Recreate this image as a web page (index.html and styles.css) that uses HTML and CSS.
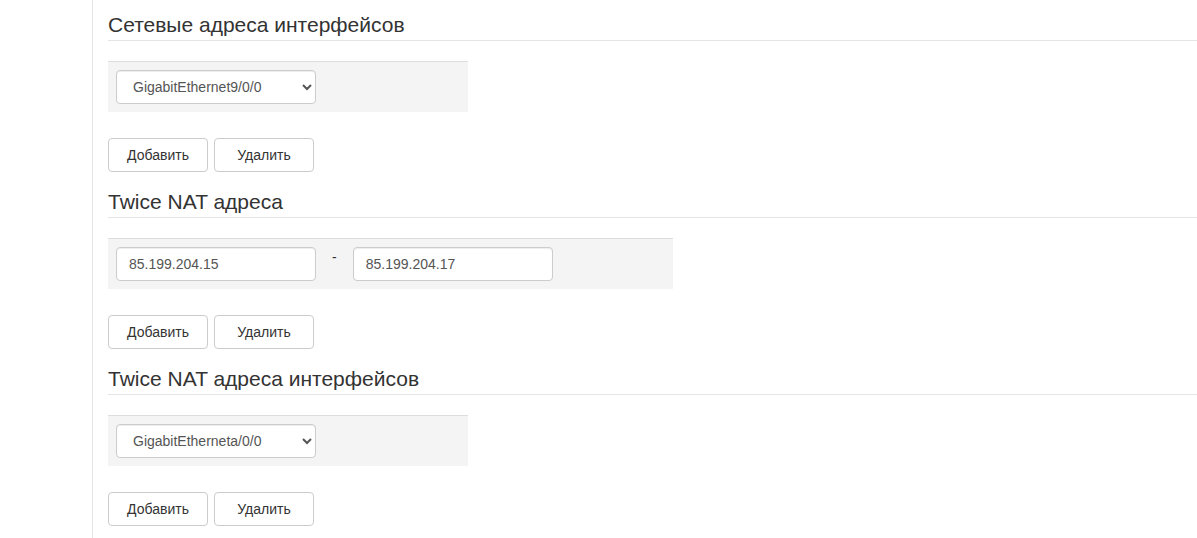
FILE: index.html
```html
<!DOCTYPE html>
<html lang="ru">
<head>
<meta charset="utf-8">
<title>NAT</title>
<link rel="stylesheet" href="styles.css">
</head>
<body>
<div class="layout">
  <aside class="sidebar"></aside>
  <main class="content">
    <section class="block">
      <h3 class="block-title">Сетевые адреса интерфейсов</h3>
      <div class="panel panel-narrow">
        <select class="field field-select">
          <option>GigabitEthernet9/0/0</option>
        </select>
      </div>
      <div class="actions">
        <button class="btn" type="button">Добавить</button>
        <button class="btn" type="button">Удалить</button>
      </div>
    </section>
    <section class="block">
      <h3 class="block-title">Twice NAT адреса</h3>
      <div class="panel panel-wide">
        <input class="field field-input" type="text" value="85.199.204.15">
        <span class="range-dash">-</span>
        <input class="field field-input" type="text" value="85.199.204.17">
      </div>
      <div class="actions">
        <button class="btn" type="button">Добавить</button>
        <button class="btn" type="button">Удалить</button>
      </div>
    </section>
    <section class="block">
      <h3 class="block-title">Twice NAT адреса интерфейсов</h3>
      <div class="panel panel-narrow">
        <select class="field field-select">
          <option>GigabitEtherneta/0/0</option>
        </select>
      </div>
      <div class="actions">
        <button class="btn" type="button">Добавить</button>
        <button class="btn" type="button">Удалить</button>
      </div>
    </section>
  </main>
</div>
</body>
</html>
```

FILE: styles.css
```css
* {
  box-sizing: border-box;
}

html, body {
  margin: 0;
  padding: 0;
  background: #fff;
}

body {
  font-family: "Liberation Sans", Arial, Helvetica, sans-serif;
  font-size: 14px;
  line-height: 20px;
  color: #333;
  overflow: hidden;
}

.layout {
  display: flex;
  min-height: 538px;
}

.sidebar {
  width: 93px;
  flex: 0 0 93px;
  border-right: 1px solid #e3e3e3;
}

.content {
  flex: 1 1 auto;
  padding: 13px 0 0 15px;
}

.block {
  margin-bottom: 18px;
}

.block-title {
  margin: 0;
  font-size: 21px;
  font-weight: 400;
  line-height: 23px;
  color: #333;
  padding-bottom: 4px;
  border-bottom: 1px solid #e5e5e5;
}

.panel {
  display: flex;
  align-items: flex-start;
  margin-top: 20px;
  padding: 8px;
  background: #f4f4f4;
  border-top: 1px solid #dddddd;
}

.panel-narrow {
  width: 360px;
}

.panel-wide {
  width: 565px;
}

.field {
  width: 200px;
  height: 34px;
  padding: 6px 12px;
  font-family: inherit;
  font-size: 14px;
  line-height: 20px;
  color: #555;
  background: #fff;
  border: 1px solid #ccc;
  border-radius: 4px;
  box-shadow: inset 0 1px 1px rgba(0, 0, 0, 0.075);
  outline: none;
}

.range-dash {
  margin: 0 16px;
  line-height: 20px;
  color: #333;
}

.actions {
  display: flex;
  gap: 6px;
  margin-top: 26px;
}

.btn {
  width: 100px;
  height: 34px;
  padding: 6px 12px;
  font-family: inherit;
  font-size: 14px;
  line-height: 20px;
  color: #333;
  background: #fff;
  border: 1px solid #ccc;
  border-radius: 4px;
  cursor: pointer;
}
```
